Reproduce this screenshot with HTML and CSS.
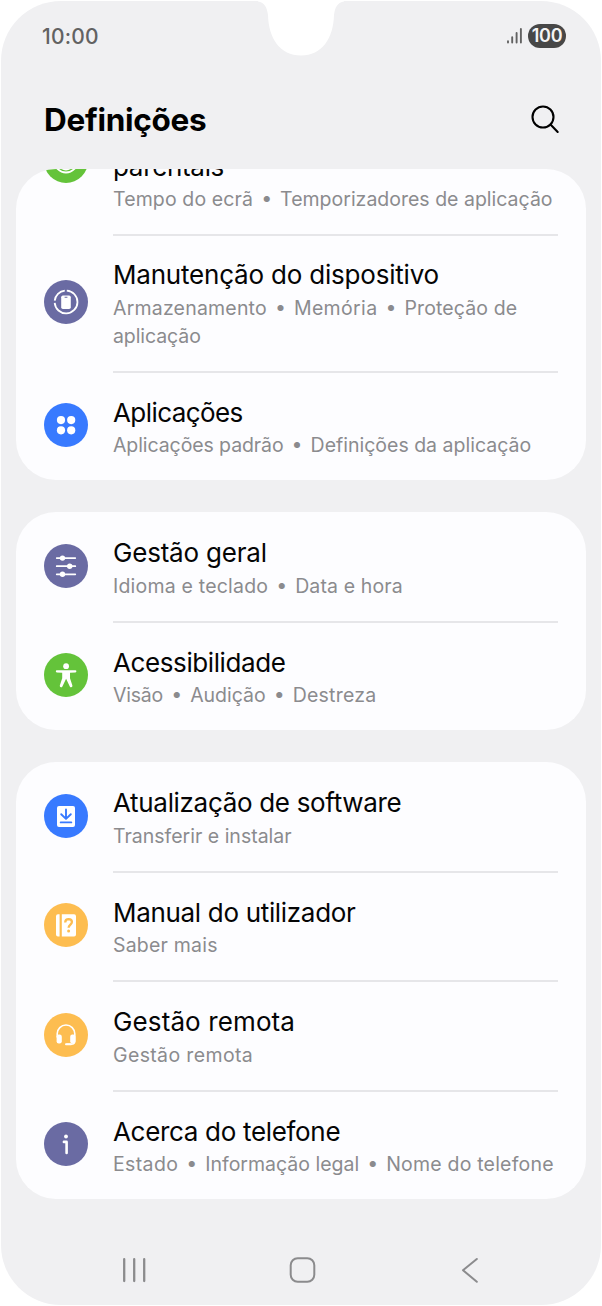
FILE: index.html
```html
<!DOCTYPE html>
<html lang="pt">
<head>
<meta charset="utf-8">
<title>Definições</title>
<link rel="stylesheet" href="styles.css">
</head>
<body>
<div class="phone">
  <svg class="notch" width="86" height="56" viewBox="0 0 86 56"><path d="M0 0V1.500C6 2 9 7 10 15C10.500 38 22 55.500 43 55.500C64 55.500 75.500 38 76 15C77 7 80 2 86 1.500V0Z" fill="#fff"/></svg>
  <header class="status">
    <span class="clock">10:00</span>
    <div class="status-right">
      <svg width="17" height="18" viewBox="0 0 17 18" stroke="#626262" stroke-width="1.9" stroke-linecap="round"><path d="M2 14.3V15.5M6.2 10.3V15.5M10.6 6V15.5M14.9 2V15.5"/></svg>
      <span class="battery">100</span>
    </div>
  </header>
  <div class="heading">
    <h1>Definições</h1>
    <svg class="search" width="32" height="32" viewBox="0 0 32 32" fill="none" stroke="#000" stroke-width="2.1" stroke-linecap="round"><circle cx="14" cy="14" r="10.5"/><path d="M21.5 21.5L28.7 29"/></svg>
  </div>

  <main>
    <section class="card">
      <div class="row clipped">
        <svg class="icon" viewBox="0 0 44 44"><circle cx="22" cy="22" r="22" fill="#64c33a"/><circle cx="22" cy="22" r="11.5" fill="none" stroke="#fff" stroke-width="1.8"/><path d="M16 28Q22 33 28 28" fill="none" stroke="#fff" stroke-width="1.8"/></svg>
        <div class="text">
          <div class="title n3">parentais</div>
          <div class="sub"><span class="w1">Tempo do ecrã</span><i>•</i><span>Temporizadores de aplicação</span></div>
        </div>
      </div>
      <div class="row">
        <svg class="icon" viewBox="0 0 44 44"><circle cx="22" cy="22" r="22" fill="#6a6ba3"/><g fill="none" stroke="#fff" stroke-width="1.8"><path d="M20.8 10.6A11.4 11.4 0 0 0 10.7 20.7M10.7 22.9A11.4 11.4 0 1 0 22.8 10.6"/></g><rect x="17.2" y="15.6" width="9.6" height="13.4" rx="1.7" fill="#fff"/><path d="M20.6 17.2H23.4" stroke="#6a6ba3" stroke-width="1.1"/></svg>
        <div class="text">
          <div class="title n2">Manutenção do dispositivo</div>
          <div class="sub"><span class="w2">Armazenamento</span><i>•</i><span class="w4">Memória</span><i>•</i><span class="w1">Proteção de</span><br><span class="n1">aplicação</span></div>
        </div>
      </div>
      <div class="row">
        <svg class="icon" viewBox="0 0 44 44"><circle cx="22" cy="22" r="22" fill="#387aff"/><g fill="#fff"><circle cx="17" cy="17.1" r="4.1"/><circle cx="27.2" cy="17.1" r="4.1"/><circle cx="17" cy="27.3" r="4.1"/><circle cx="27.2" cy="27.3" r="4.1"/></g></svg>
        <div class="text">
          <div class="title n5">Aplicações</div>
          <div class="sub"><span class="n1">Aplicações padrão</span><i>•</i><span>Definições da aplicação</span></div>
        </div>
      </div>
    </section>

    <section class="card">
      <div class="row">
        <svg class="icon" viewBox="0 0 44 44"><circle cx="22" cy="22" r="22" fill="#6a6ba3"/><path d="M12.7 14.1H31.3M12.7 22.2H31.3M12.7 30.3H31.3" stroke="#fff" stroke-width="1.7" stroke-linecap="round"/><g fill="#fff"><circle cx="18.5" cy="14.1" r="2.7"/><circle cx="25.7" cy="22.2" r="2.7"/><circle cx="18.5" cy="30.3" r="2.7"/></g></svg>
        <div class="text">
          <div class="title n2">Gestão geral</div>
          <div class="sub"><span class="w2">Idioma e teclado</span><i>•</i><span class="w1">Data e hora</span></div>
        </div>
      </div>
      <div class="row">
        <svg class="icon" viewBox="0 0 44 44"><circle cx="22" cy="22" r="22" fill="#64c33a"/><circle cx="22.1" cy="13.2" r="2.9" fill="#fff"/><path d="M12.8 17.2H31.4Q32.4 17.3 32.4 18.3T31.4 19.4L26 19.8V25.3L28.4 32.6Q28.6 34 27.3 34.3Q26.3 34.4 25.8 33.4L22.1 25.8L18.4 33.4Q17.9 34.4 16.9 34.3Q15.6 34 15.8 32.6L18.2 25.3V19.8L12.8 19.4Q11.8 19.3 11.8 18.3T12.8 17.2Z" fill="#fff"/></svg>
        <div class="text">
          <div class="title n4">Acessibilidade</div>
          <div class="sub"><span class="n2">Visão</span><i>•</i><span>Audição</span><i>•</i><span class="w2">Destreza</span></div>
        </div>
      </div>
    </section>

    <section class="card">
      <div class="row">
        <svg class="icon" viewBox="0 0 44 44"><circle cx="22" cy="22" r="22" fill="#387aff"/><rect x="13" y="12" width="18" height="21" rx="2" fill="#fff"/><path d="M22 15.500V24.300M17.2 20.2L22 24.9L26.8 20.2M16.7 28.4H27.3" fill="none" stroke="#387aff" stroke-width="1.9" stroke-linecap="round" stroke-linejoin="round"/></svg>
        <div class="text">
          <div class="title n3">Atualização de software</div>
          <div class="sub"><span>Transferir e instalar</span></div>
        </div>
      </div>
      <div class="row">
        <svg class="icon" viewBox="0 0 44 44"><circle cx="22" cy="22" r="22" fill="#fdbd50"/><path d="M14 11.3H15.6V33.4H14Q12 33.4 12 31.5V13.2Q12 11.3 14 11.3ZM17.8 11.3H30.1Q32 11.3 32 13.2V31.5Q32 33.4 30.1 33.4H17.8Z" fill="#fff"/><path d="M21.2 19.5Q21.3 16.2 24.6 16.2Q27.9 16.3 27.9 19.1C27.9 21.5 24.6 21.8 24.6 24.8" fill="none" stroke="#fdbd50" stroke-width="2.3"/><circle cx="24.6" cy="28" r="1.5" fill="#fdbd50"/></svg>
        <div class="text">
          <div class="title n3">Manual do utilizador</div>
          <div class="sub"><span class="w2">Saber mais</span></div>
        </div>
      </div>
      <div class="row">
        <svg class="icon" viewBox="0 0 44 44"><circle cx="22" cy="22" r="22" fill="#fdbd50"/><path d="M13.2 24V20.8A8.8 8.8 0 0 1 30.8 20.8V27.8Q30.8 31.3 27.3 31.3H22.8" fill="none" stroke="#fff" stroke-width="1.6" stroke-linecap="round"/><rect x="12.6" y="21.6" width="5.2" height="8.8" rx="2.2" fill="#fff"/><rect x="26.2" y="21.6" width="5.2" height="8.8" rx="2.2" fill="#fff"/><path d="M22 31.2H27" stroke="#fff" stroke-width="2" stroke-linecap="round"/></svg>
        <div class="text">
          <div class="title w1">Gestão remota</div>
          <div class="sub"><span class="w4">Gestão remota</span></div>
        </div>
      </div>
      <div class="row">
        <svg class="icon" viewBox="0 0 44 44"><circle cx="22" cy="22" r="22" fill="#6a6ba3"/><circle cx="22" cy="14.5" r="1.9" fill="#fff"/><path d="M19.9 19.9H22.6V31" fill="none" stroke="#fff" stroke-width="2.6" stroke-linecap="round" stroke-linejoin="round"/></svg>
        <div class="text">
          <div class="title n3">Acerca do telefone</div>
          <div class="sub"><span class="w4">Estado</span><i>•</i><span>Informação legal</span><i>•</i><span class="w2">Nome do telefone</span></div>
        </div>
      </div>
    </section>
  </main>

  <nav class="navbar">
    <svg width="28" height="28" viewBox="0 0 28 28"><path d="M4.2 3.2V25M14.2 3.2V25M24.2 3.2V25" stroke="#8b8b8d" stroke-width="2.3" stroke-linecap="round"/></svg>
    <svg width="28" height="28" viewBox="0 0 28 28"><rect x="2.7" y="2.2" width="23.6" height="23.6" rx="7" fill="none" stroke="#8b8b8d" stroke-width="2"/></svg>
    <svg width="28" height="28" viewBox="0 0 28 28"><path d="M21.8 3L8 14.2L21.8 25.8" fill="none" stroke="#8b8b8d" stroke-width="2" stroke-linecap="round" stroke-linejoin="round"/></svg>
  </nav>
</div>
</body>
</html>
```

FILE: styles.css
```css
* { box-sizing: border-box; }
body { margin: 0; background: #fff; font-family: Inter, Roboto, sans-serif; }
.phone {
  position: relative;
  width: 600px;
  height: 1304px;
  margin: 1px;
  padding: 0 15px;
  background: #f0f0f2;
  border-radius: 60px;
  overflow: hidden;
  display: flex;
  flex-direction: column;
}
.notch { position: absolute; left: 257px; top: -1px; }

.status {
  height: 70px;
  padding: 0 20px 0 26px;
  display: flex;
  align-items: center;
  justify-content: space-between;
}
.clock { font-size: 21px; font-weight: 500; letter-spacing: .2px; color: #626262; }
.status-right { display: flex; align-items: center; gap: 5px; }
.battery {
  width: 38px;
  height: 24px;
  border-radius: 12px;
  background: #474747;
  color: #f4f4f4;
  font-size: 18px;
  font-weight: 600;
  letter-spacing: -.3px;
  line-height: 24px;
  text-align: center;
}

.heading {
  height: 98px;
  padding: 0 25px 0 26px;
  display: flex;
  align-items: center;
  justify-content: space-between;
}
.search { margin-bottom: 3px; }
h1 { margin: 0; font-size: 31.5px; font-weight: 700; letter-spacing: -.3px; line-height: 40px; padding-left: 2px; }

main { display: flex; flex-direction: column; gap: 32px; }
.card { background: #fdfdff; border-radius: 40px; overflow: hidden; }
.row {
  display: flex;
  align-items: center;
  gap: 25px;
  padding: 0 28px;
}
.icon { width: 44px; height: 44px; flex: none; }
.text { flex: 1; padding: 24px 0 21px; white-space: nowrap; }
.row + .row .text { border-top: 2px solid #e6e6e9; padding-top: 23px; }
.title { font-size: 26px; line-height: 34px; color: #050505; }
.sub { margin-top: 1.5px; font-size: 19.5px; line-height: 28px; color: #8b8b8e; }
.sub i {
  display: inline-block;
  width: 27px;
  line-height: 20px;
  vertical-align: 1px;
  font-style: normal;
  text-align: center;
}

.clipped { height: 64.5px; align-items: flex-end; }
.clipped .icon { margin-bottom: 50.5px; }
.clipped .text { padding-bottom: 20.5px; }
.clipped + .row .text { padding-top: 22.5px; }

/* letter tracking, narrower (n) and wider (w) */
.n1 { letter-spacing: -.09px; }
.n2 { letter-spacing: -.2px; }
.n3 { letter-spacing: -.32px; }
.n4 { letter-spacing: -.4px; }
.n5 { letter-spacing: -.58px; }
.w1 { letter-spacing: .12px; }
.w2 { letter-spacing: .2px; }
.w4 { letter-spacing: .36px; }

.navbar {
  margin-top: auto;
  height: 49px;
  padding: 0 103px 0 104px;
  display: flex;
  justify-content: space-between;
}
```
